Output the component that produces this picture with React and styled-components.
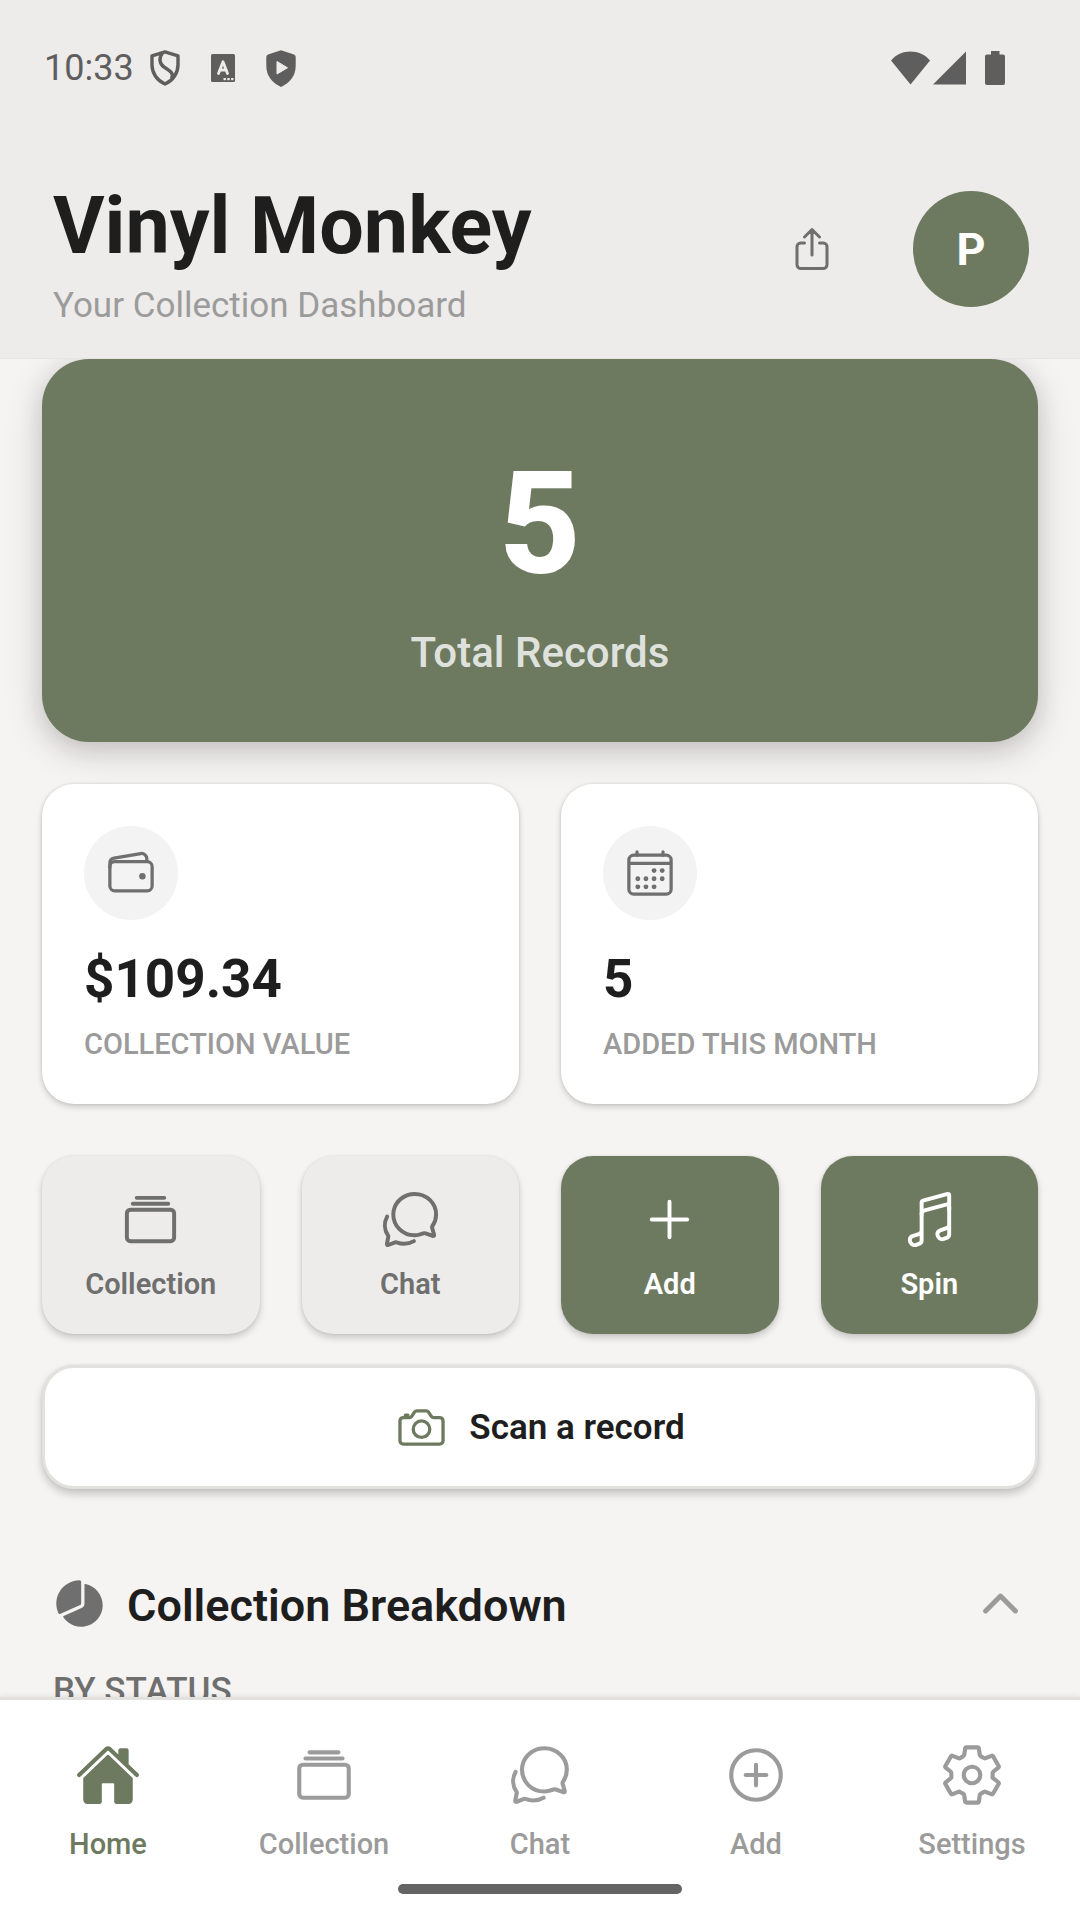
// src/App.jsx
import React, { useState } from 'react';
import styled, { createGlobalStyle } from 'styled-components';
import {
  IoAdd,
  IoAddCircleOutline,
  IoAlbumsOutline,
  IoCalendarOutline,
  IoCameraOutline,
  IoChatbubblesOutline,
  IoChevronDown,
  IoChevronUp,
  IoHome,
  IoMusicalNotesOutline,
  IoPieChart,
  IoSettingsOutline,
  IoShareOutline,
  IoWalletOutline,
} from 'react-icons/io5';

const GlobalStyle = createGlobalStyle`
  * {
    box-sizing: border-box;
  }

  body {
    margin: 0;
    background-color: #f5f4f2;
    font-family: Roboto, "Noto Sans", sans-serif;
    color: #1e1e1e;
  }

  h1, h2, h3, p {
    margin: 0;
  }

  button {
    font-family: inherit;
    border: none;
    padding: 0;
    cursor: pointer;
  }

  svg {
    display: block;
    flex-shrink: 0;
  }
`;

const Screen = styled.div`
  display: flex;
  flex-direction: column;
  height: 100vh;
`;

const Header = styled.header`
  flex-shrink: 0;
  background-color: #edecea;
  border-bottom: 1px solid #e6e5e2;
`;

const StatusBar = styled.div`
  display: flex;
  justify-content: space-between;
  align-items: center;
  height: 136px;
  padding: 0 75px 0 44px;
  color: #5e5e5e;
`;

const StatusGroup = styled.div`
  display: flex;
  align-items: center;
  gap: ${({ $gap }) => $gap}px;
`;

const Clock = styled.span`
  font-size: 36px;
  line-height: 42px;
  margin-right: 16px;
`;

const TitleRow = styled.div`
  display: flex;
  justify-content: space-between;
  align-items: center;
  padding: 36px 51px 32px 53px;
`;

const Title = styled.h1`
  font-size: 79px;
  line-height: 108px;
  font-weight: 700;
`;

const Subtitle = styled.p`
  margin-top: 6px;
  font-size: 35px;
  line-height: 40px;
  color: #9b9b9b;
`;

const HeaderActions = styled.div`
  display: flex;
  align-items: center;
  gap: 43px;
`;

const IconButton = styled.button`
  display: flex;
  justify-content: center;
  align-items: center;
  width: 116px;
  height: 116px;
  border-radius: 50%;
  background: none;
  color: #6f6f6f;
`;

const Avatar = styled(IconButton)`
  background-color: #6d7a60;
  color: #ffffff;
  font-size: 45px;
  font-weight: 700;
`;

const Content = styled.main`
  flex: 1;
  min-height: 0;
  overflow-y: auto;
  scrollbar-width: none;
  padding: 0 42px 42px;
`;

const Hero = styled.section`
  padding: 64px 42px;
  border-radius: 47px;
  background-color: #6d7a60;
  box-shadow: 0 10px 38px rgba(40, 30, 30, 0.16), 0 6px 22px rgba(40, 30, 30, 0.12);
  color: #ffffff;
  text-align: center;
`;

const HeroNumber = styled.p`
  font-size: 142px;
  line-height: 204px;
  font-weight: 800;
`;

const HeroLabel = styled.p`
  font-size: 42px;
  line-height: 51px;
  font-weight: 500;
  color: rgba(255, 255, 255, 0.8);
`;

const StatGrid = styled.section`
  display: grid;
  grid-template-columns: 1fr 1fr;
  gap: 42px;
  margin-top: 42px;
`;

const StatCard = styled.div`
  padding: 42px;
  border-radius: 32px;
  background-color: #ffffff;
  box-shadow: 0 3px 6px rgba(0, 0, 0, 0.17), 0 0 3px rgba(0, 0, 0, 0.12);
`;

const StatIcon = styled.div`
  display: flex;
  justify-content: center;
  align-items: center;
  width: 94px;
  height: 94px;
  border-radius: 50%;
  background-color: #f3f3f3;
  color: #6f6f6f;
`;

const StatValue = styled.p`
  margin-top: 28px;
  font-size: 53px;
  line-height: 62px;
  font-weight: 700;
`;

const StatLabel = styled.p`
  margin-top: 16px;
  font-size: 29px;
  line-height: 36px;
  font-weight: 500;
  color: #9b9b9b;
  text-transform: uppercase;
`;

const ActionGrid = styled.section`
  display: grid;
  grid-template-columns: repeat(4, 1fr);
  gap: 42px;
  margin-top: 52px;
`;

const ActionButton = styled.button`
  display: flex;
  flex-direction: column;
  justify-content: center;
  align-items: center;
  gap: 16px;
  height: 178px;
  padding-bottom: 2px;
  border-radius: 32px;
  background-color: ${({ $primary }) => ($primary ? '#6d7a60' : '#edecea')};
  color: ${({ $primary }) => ($primary ? '#ffffff' : '#6f6f6f')};
  font-size: 29px;
  line-height: 34px;
  font-weight: 600;
  box-shadow: 0 4px 7px rgba(0, 0, 0, 0.18), 0 0 3px rgba(0, 0, 0, 0.08);
`;

const ScanButton = styled.button`
  display: flex;
  justify-content: center;
  align-items: center;
  gap: 21px;
  width: 100%;
  height: 124px;
  margin-top: 31px;
  border: 3px solid #e2e1de;
  border-radius: 32px;
  background-color: #ffffff;
  color: #1e1e1e;
  font-size: 35px;
  font-weight: 600;
  box-shadow: 0 5px 9px rgba(0, 0, 0, 0.2), 0 0 3px rgba(0, 0, 0, 0.08);

  svg {
    color: #6d7a60;
  }
`;

const Breakdown = styled.section`
  margin-top: 87px;
  padding: 0 11px;
`;

const BreakdownToggle = styled.button`
  display: flex;
  align-items: center;
  gap: 21px;
  width: 100%;
  background: none;
  color: #9b9b9b;

  h2 {
    flex: 1;
    padding-top: 5px;
    text-align: left;
    font-size: 45px;
    line-height: 50px;
    font-weight: 600;
    color: #1e1e1e;
  }
`;

const GroupTitle = styled.h3`
  margin-top: 40px;
  font-size: 35px;
  line-height: 40px;
  font-weight: 500;
  color: #6f6f6f;
  text-transform: uppercase;
`;

const BottomNav = styled.nav`
  position: relative;
  flex-shrink: 0;
  padding: 42px 0 26px;
  border-top: 3px solid #e2e1de;
  background-color: #ffffff;
  box-shadow: 0 -1px 6px rgba(0, 0, 0, 0.08);
`;

const NavList = styled.div`
  display: grid;
  grid-template-columns: repeat(5, 1fr);
`;

const NavLink = styled.a`
  display: flex;
  flex-direction: column;
  align-items: center;
  gap: 19px;
  color: ${({ $active }) => ($active ? '#6d7a60' : '#9b9b9b')};
  font-size: 29px;
  line-height: 34px;
  font-weight: 500;
  text-decoration: none;
`;

const HomeIndicator = styled.div`
  width: 284px;
  height: 10px;
  margin: 23px auto 0;
  border-radius: 5px;
  background-color: #646464;
`;

const SecureIcon = () => (
  <svg width="30" height="36" viewBox="0 0 30 36" fill="none" stroke="currentColor" strokeWidth="3.4" strokeLinejoin="round">
    <path d="M15 1.9 L28 5.8 V15 C28 23 23 30.500 15 34 C7 30.500 2 23 2 15 V5.800 Z" />
    <path d="M12.500 3 C8.500 8 9.500 14 14 17 C20 20.800 24.500 23.500 21.500 28.500" />
  </svg>
);

const KeyboardIcon = () => (
  <svg width="24" height="28" viewBox="0 0 24 28">
    <rect width="24" height="28" rx="1.500" fill="currentColor" />
    <g fill="none" stroke="#edecea" strokeWidth="2.800" strokeLinecap="round" strokeLinejoin="round">
      <polyline points="7.500,19.500 12,7.800 16.500,19.500" />
      <line x1="9" y1="16" x2="15" y2="16" />
    </g>
    <g fill="#edecea">
      <rect x="12.500" y="24" width="2.400" height="2.200" />
      <rect x="16.300" y="24" width="2.400" height="2.200" />
      <rect x="20.100" y="24" width="2.400" height="2.200" />
    </g>
  </svg>
);

const PlayProtectIcon = () => (
  <svg width="30" height="37" viewBox="0 0 30 37">
    <path
      d="M15 0.300 L28 4.600 Q29.700 5.200 29.700 7 V16 C29.700 26 23.500 33 15 36.900 C6.500 33 0.300 26 0.300 16 V7 Q0.300 5.200 2 4.600 Z"
      fill="currentColor"
    />
    <path d="M11 11.500 L21.500 17.800 L11 24 Z" fill="#edecea" stroke="#edecea" strokeLinejoin="round" />
  </svg>
);

const WifiIcon = () => (
  <svg width="39" height="34" viewBox="0 0 39 34" fill="currentColor">
    <path d="M19.500 33.500 L0 9.500 C5 3.500 12 0.500 19.500 0.500 S34 3.500 39 9.500 Z" />
  </svg>
);

const SignalIcon = () => (
  <svg width="33" height="34" viewBox="0 0 33 34" fill="currentColor">
    <path d="M33 0.500 V33.500 H0 Z" />
  </svg>
);

const BatteryIcon = () => (
  <svg width="20" height="34" viewBox="0 0 20 34" fill="currentColor">
    <path d="M6 0 H14.500 V3.500 H18 Q20 3.500 20 5.500 V32 Q20 34 18 34 H2 Q0 34 0 32 V5.500 Q0 3.500 2 3.500 H6 Z" />
  </svg>
);

const stats = [
  { label: 'Collection Value', value: '$109.34', icon: IoWalletOutline },
  { label: 'Added This Month', value: '5', icon: IoCalendarOutline },
];

const actions = [
  { label: 'Collection', icon: IoAlbumsOutline },
  { label: 'Chat', icon: IoChatbubblesOutline },
  { label: 'Add', icon: IoAdd, primary: true },
  { label: 'Spin', icon: IoMusicalNotesOutline, primary: true },
];

const tabs = [
  { label: 'Home', icon: IoHome },
  { label: 'Collection', icon: IoAlbumsOutline },
  { label: 'Chat', icon: IoChatbubblesOutline },
  { label: 'Add', icon: IoAddCircleOutline },
  { label: 'Settings', icon: IoSettingsOutline },
];

const App = () => {
  const [activeTab, setActiveTab] = useState('Home');
  const [open, setOpen] = useState(true);

  return (
    <Screen>
      <GlobalStyle />
      <Header>
        <StatusBar>
          <StatusGroup $gap={31}>
            <StatusGroup $gap={0}>
              <Clock>10:33</Clock>
              <SecureIcon />
            </StatusGroup>
            <KeyboardIcon />
            <PlayProtectIcon />
          </StatusGroup>
          <StatusGroup $gap={19}>
            <StatusGroup $gap={3}>
              <WifiIcon />
              <SignalIcon />
            </StatusGroup>
            <BatteryIcon />
          </StatusGroup>
        </StatusBar>
        <TitleRow>
          <div>
            <Title>Vinyl Monkey</Title>
            <Subtitle>Your Collection Dashboard</Subtitle>
          </div>
          <HeaderActions>
            <IconButton aria-label="Share">
              <IoShareOutline size={48} />
            </IconButton>
            <Avatar>P</Avatar>
          </HeaderActions>
        </TitleRow>
      </Header>

      <Content>
        <Hero>
          <HeroNumber>5</HeroNumber>
          <HeroLabel>Total Records</HeroLabel>
        </Hero>

        <StatGrid>
          {stats.map(({ label, value, icon: Icon }) => (
            <StatCard key={label}>
              <StatIcon>
                <Icon size={52} />
              </StatIcon>
              <StatValue>{value}</StatValue>
              <StatLabel>{label}</StatLabel>
            </StatCard>
          ))}
        </StatGrid>

        <ActionGrid>
          {actions.map(({ label, icon: Icon, primary }) => (
            <ActionButton key={label} $primary={primary}>
              <Icon size={63} />
              {label}
            </ActionButton>
          ))}
        </ActionGrid>

        <ScanButton>
          <IoCameraOutline size={53} />
          Scan a record
        </ScanButton>

        <Breakdown>
          <BreakdownToggle aria-expanded={open} onClick={() => setOpen(!open)}>
            <IoPieChart size={53} color="#6f6f6f" />
            <h2>Collection Breakdown</h2>
            {open ? <IoChevronUp size={53} /> : <IoChevronDown size={53} />}
          </BreakdownToggle>
          {open && <GroupTitle>By Status</GroupTitle>}
        </Breakdown>
      </Content>

      <BottomNav>
        <NavList>
          {tabs.map(({ label, icon: Icon }) => (
            <NavLink
              key={label}
              href={`#${label.toLowerCase()}`}
              $active={label === activeTab}
              onClick={() => setActiveTab(label)}
            >
              <Icon size={66} />
              {label}
            </NavLink>
          ))}
        </NavList>
        <HomeIndicator />
      </BottomNav>
    </Screen>
  );
};

export default App;
